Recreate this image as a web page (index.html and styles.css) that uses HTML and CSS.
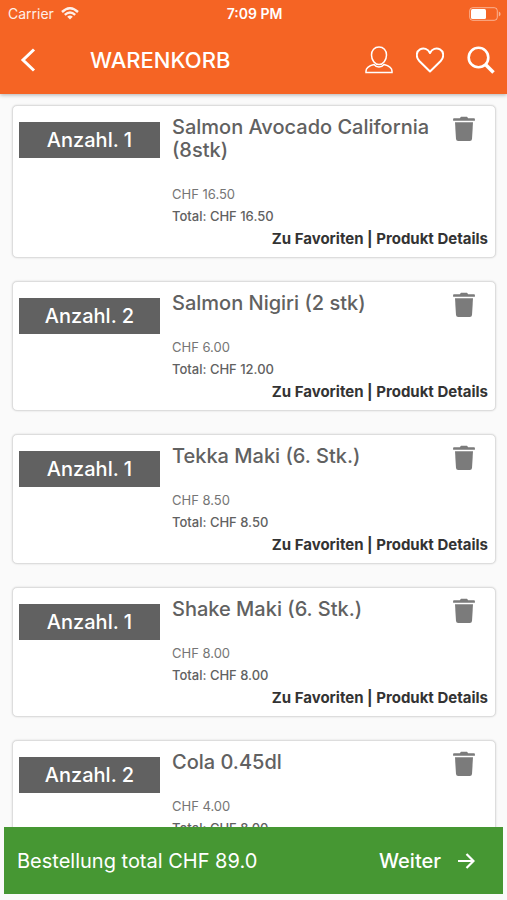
FILE: index.html
```html
<!DOCTYPE html>
<html lang="de">
<head>
    <meta charset="UTF-8">
    <meta name="viewport" content="width=device-width, initial-scale=1.0">
    <title>Warenkorb</title>
    <link rel="stylesheet" href="styles.css">
</head>
<body>
    <!-- Icon, das in jeder Karte verwendet wird -->
    <svg class="sprite" aria-hidden="true">
        <symbol id="icon-trash" viewBox="0 0 22 26">
            <path d="M1 2.200h5.800L8 .7h6l1.200 1.500H21q.9 0 .9.800v1.800H.1V3q0-.8.900-.8z"/>
            <path d="M2 6.200h18l-1 16.800q-.2 2-2.200 2H5.200q-2 0-2.200-2z"/>
        </symbol>
    </svg>

    <div class="app">
        <header class="header">
            <div class="status-bar">
                <div class="carrier">
                    <span>Carrier</span>
                    <svg width="18" height="13" viewBox="0 0 18 13" fill="none" stroke="#fff" stroke-width="2.400">
                        <path d="M1 5Q9-2.500 17 5"/>
                        <path d="M3.800 7.900Q9 3.300 14.200 7.900"/>
                        <path d="M9 12.500L6.200 9.700Q9 7.400 11.800 9.700z" fill="#fff" stroke="none"/>
                    </svg>
                </div>
                <span class="clock">7:09 PM</span>
                <div class="battery">
                    <svg width="32" height="14" viewBox="0 0 32 14">
                        <rect x=".7" y=".7" width="27.600" height="12.600" rx="3" fill="none" stroke="#fff" stroke-opacity=".5"/>
                        <rect x="2" y="2" width="15" height="10" rx="1.500" fill="#fff"/>
                        <path d="M29.800 4.500q1.800 .6 1.800 2.500t-1.800 2.500z" fill="#fff" fill-opacity=".5"/>
                    </svg>
                </div>
            </div>
            <div class="nav-bar">
                <button type="button" class="icon-btn" aria-label="Zurück">
                    <svg width="16" height="24" viewBox="0 0 16 24" fill="none" stroke="#fff" stroke-width="3">
                        <path d="M14 1.500L3 12l11 10.500"/>
                    </svg>
                </button>
                <h1>WARENKORB</h1>
                <div class="nav-actions">
                    <button type="button" class="icon-btn" aria-label="Konto">
                        <svg width="28" height="28" viewBox="0 0 28 28" fill="none" stroke="#fff" stroke-width="1.500">
                            <path d="M14 1C9.500 1 6.500 4.300 6.500 9c0 5.200 3.500 9.500 7.500 9.500s7.500-4.300 7.500-9.500c0-4.700-3-8-7.500-8z"/>
                            <path d="M9 18.500C3.500 20 1 21.500 1 25v1.500h26V25c0-3.500-2.500-5-8-6.500q-2 2.500-5 2.500t-5-2.500z"/>
                        </svg>
                    </button>
                    <button type="button" class="icon-btn" aria-label="Favoriten">
                        <svg width="28" height="26" viewBox="0 0 28 26" fill="none" stroke="#fff" stroke-width="2" stroke-linejoin="round">
                            <path d="M14 24.500L3.300 14C-.5 10 .3 4.500 4 2.400 7.800.4 12 1.900 14 6c2-4.100 6.200-5.600 10-3.600 3.700 2.100 4.500 7.600.7 11.600z"/>
                        </svg>
                    </button>
                    <button type="button" class="icon-btn" aria-label="Suchen">
                        <svg width="28" height="28" viewBox="0 0 28 28" fill="none" stroke="#fff">
                            <circle cx="11.500" cy="11.500" r="9.800" stroke-width="2.600"/>
                            <path d="M18.500 18.500l8 8" stroke-width="3.600"/>
                        </svg>
                    </button>
                </div>
            </div>
        </header>

        <main class="cart">
            <article class="card">
                <button type="button" class="quantity">Anzahl. 1</button>
                <div class="details">
                    <div class="title-row">
                        <h2>Salmon Avocado California (8stk)</h2>
                        <button type="button" class="icon-btn remove-btn" aria-label="Entfernen"><svg class="trash"><use href="#icon-trash"/></svg></button>
                    </div>
                    <p class="price">CHF 16.50</p>
                    <p class="total">Total: CHF 16.50</p>
                    <p class="links"><a href="#">Zu Favoriten</a> | <a href="#">Produkt Details</a></p>
                </div>
            </article>

            <article class="card">
                <button type="button" class="quantity">Anzahl. 2</button>
                <div class="details">
                    <div class="title-row">
                        <h2>Salmon Nigiri (2 stk)</h2>
                        <button type="button" class="icon-btn remove-btn" aria-label="Entfernen"><svg class="trash"><use href="#icon-trash"/></svg></button>
                    </div>
                    <p class="price">CHF 6.00</p>
                    <p class="total">Total: CHF 12.00</p>
                    <p class="links"><a href="#">Zu Favoriten</a> | <a href="#">Produkt Details</a></p>
                </div>
            </article>

            <article class="card">
                <button type="button" class="quantity">Anzahl. 1</button>
                <div class="details">
                    <div class="title-row">
                        <h2>Tekka Maki (6. Stk.)</h2>
                        <button type="button" class="icon-btn remove-btn" aria-label="Entfernen"><svg class="trash"><use href="#icon-trash"/></svg></button>
                    </div>
                    <p class="price">CHF 8.50</p>
                    <p class="total">Total: CHF 8.50</p>
                    <p class="links"><a href="#">Zu Favoriten</a> | <a href="#">Produkt Details</a></p>
                </div>
            </article>

            <article class="card">
                <button type="button" class="quantity">Anzahl. 1</button>
                <div class="details">
                    <div class="title-row">
                        <h2>Shake Maki (6. Stk.)</h2>
                        <button type="button" class="icon-btn remove-btn" aria-label="Entfernen"><svg class="trash"><use href="#icon-trash"/></svg></button>
                    </div>
                    <p class="price">CHF 8.00</p>
                    <p class="total">Total: CHF 8.00</p>
                    <p class="links"><a href="#">Zu Favoriten</a> | <a href="#">Produkt Details</a></p>
                </div>
            </article>

            <article class="card">
                <button type="button" class="quantity">Anzahl. 2</button>
                <div class="details">
                    <div class="title-row">
                        <h2>Cola 0.45dl</h2>
                        <button type="button" class="icon-btn remove-btn" aria-label="Entfernen"><svg class="trash"><use href="#icon-trash"/></svg></button>
                    </div>
                    <p class="price">CHF 4.00</p>
                    <p class="total">Total: CHF 8.00</p>
                    <p class="links"><a href="#">Zu Favoriten</a> | <a href="#">Produkt Details</a></p>
                </div>
            </article>
        </main>

        <footer class="checkout">
            <span>Bestellung total CHF 89.0</span>
            <button type="button" class="next-btn">
                Weiter
                <svg width="18" height="16" viewBox="0 0 18 16" fill="none" stroke="#fff" stroke-width="2.200">
                    <path d="M1 8h15M9.500 1l7 7-7 7"/>
                </svg>
            </button>
        </footer>
    </div>
</body>
</html>
```
FILE: styles.css
```css
* {
    box-sizing: border-box;
}

body {
    font-family: Inter, "Liberation Sans", sans-serif;
    background-color: #fafafa;
    color: #616161;
    margin: 0;
}

button {
    font-family: inherit;
    border: none;
    padding: 0;
    cursor: pointer;
}

h1, h2, p {
    margin: 0;
}

svg {
    display: block;
}

.sprite {
    display: none;
}

.app {
    display: flex;
    flex-direction: column;
    height: 100vh;
}

.header {
    background-color: #f56424;
    color: #fff;
    box-shadow: 0 1px 4px rgba(0, 0, 0, 0.3);
    z-index: 1;
}

.status-bar {
    display: grid;
    grid-template-columns: 1fr auto 1fr;
    align-items: center;
    height: 27px;
    padding: 0 6px 0 8px;
    font-size: 14px;
}

.carrier {
    display: flex;
    align-items: center;
    gap: 7px;
    opacity: 0.9;
}

.clock {
    font-weight: 600;
}

.battery {
    justify-self: end;
}

.nav-bar {
    display: flex;
    align-items: center;
    height: 67px;
    padding: 0 12px 2px 20px;
}

.nav-bar h1 {
    flex: 1;
    margin-left: 54px;
    font-size: 22px;
    font-weight: 500;
}

.nav-actions {
    display: flex;
    align-items: center;
    gap: 23px;
}

.icon-btn {
    background: none;
}

.cart {
    flex: 1;
    min-height: 0;
    padding: 11px 11px 11px 12px;
    overflow-y: auto;
    scrollbar-width: none;
}

.card {
    display: flex;
    align-items: flex-start;
    gap: 12px;
    margin-bottom: 23px;
    padding: 10px 7px 7px 6px;
    background-color: #fff;
    border: 1px solid #ddd;
    border-radius: 5px;
    box-shadow: 0 0 2px rgba(0, 0, 0, 0.15);
}

.quantity {
    width: 141px;
    height: 36px;
    margin-top: 6px;
    background-color: #616161;
    color: #fff;
    font-size: 20px;
    font-weight: 500;
}

.details {
    flex: 1;
}

.title-row {
    display: flex;
    align-items: flex-start;
    justify-content: space-between;
    padding-right: 13px;
}

.title-row h2 {
    font-size: 20px;
    font-weight: 500;
    line-height: 23px;
}

.remove-btn {
    margin-bottom: -3px;
}

.trash {
    width: 22px;
    height: 26px;
    fill: #7b7b7b;
}

.price, .total {
    font-size: 13px;
    line-height: 22px;
}

.price {
    margin-top: 21px;
    color: #757575;
}

.total {
    font-weight: 500;
}

.links {
    color: #333;
    font-size: 15px;
    font-weight: 700;
    line-height: 23px;
    text-align: right;
}

.links a {
    color: inherit;
    text-decoration: none;
}

.checkout {
    display: flex;
    align-items: center;
    justify-content: space-between;
    height: 67px;
    margin: 0 4px 6px;
    padding: 0 28px 0 13px;
    background-color: #469733;
    color: #fff;
    font-size: 20px;
    font-weight: 400;
}

.next-btn {
    display: flex;
    align-items: center;
    gap: 16px;
    background: none;
    color: inherit;
    font-size: 20px;
    font-weight: 500;
}
```
